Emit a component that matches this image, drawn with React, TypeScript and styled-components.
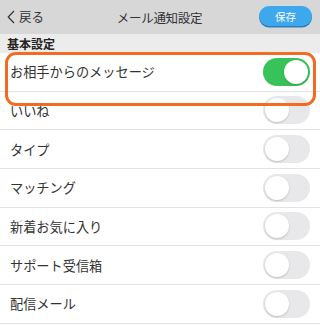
import React, { useState } from 'react';
import styled, { createGlobalStyle } from 'styled-components';

const GlobalStyle = createGlobalStyle`
  html, body {
    margin: 0;
    padding: 0;
    background: #ffffff;
  }
  body {
    font-family: "Noto Sans CJK JP", "Noto Sans", sans-serif;
    color: #333333;
  }
`;

type SettingItem = {
  label: string;
  on: boolean;
};

const initialItems: SettingItem[] = [
  { label: 'お相手からのメッセージ', on: true },
  { label: 'いいね', on: false },
  { label: 'タイプ', on: false },
  { label: 'マッチング', on: false },
  { label: '新着お気に入り', on: false },
  { label: 'サポート受信箱', on: false },
  { label: '配信メール', on: false },
];

export default function App() {
  const [items, setItems] = useState(initialItems);

  const toggle = (index: number) => {
    setItems(items.map((item, i) => (i === index ? { ...item, on: !item.on } : item)));
  };

  return (
    <>
      <GlobalStyle />
      <Page>
        <Header>
          <BackButton>
            <svg width="8" height="14" viewBox="0 0 8 14">
              <path d="M7 1 L1.2 7 L7 13" fill="none" stroke="#333" strokeWidth="1.2" />
            </svg>
            <span>戻る</span>
          </BackButton>
          <Title>メール通知設定</Title>
          <SaveButton>保存</SaveButton>
        </Header>
        <SectionTitle>基本設定</SectionTitle>
        <List>
          <Highlight />
          {items.map((item, i) => (
            <Row key={item.label}>
              <Label>{item.label}</Label>
              <Switch $on={item.on} onClick={() => toggle(i)}>
                <Knob $on={item.on} />
              </Switch>
            </Row>
          ))}
        </List>
      </Page>
    </>
  );
}

const Page = styled.div`
  width: 320px;
  height: 326px;
  overflow: hidden;
  background: #ffffff;
`;

const Header = styled.div`
  height: 34px;
  display: grid;
  grid-template-columns: 1fr auto 1fr;
  align-items: center;
  padding: 0 8px 0 7px;
  background: #d7d7d7;
  box-sizing: border-box;
`;

const BackButton = styled.div`
  display: flex;
  align-items: center;
  gap: 4px;
  font-size: 12.5px;
  color: #333;
  justify-self: start;

  span {
    line-height: 1;
  }
`;

const Title = styled.div`
  font-size: 12.5px;
  color: #333;
  letter-spacing: -0.3px;
`;

const SaveButton = styled.button`
  justify-self: end;
  width: 53px;
  height: 20px;
  border: none;
  border-radius: 10px;
  background: #3ea8ec;
  box-shadow: 0 1.5px 0 #2a7fbf;
  color: #ffffff;
  font-family: inherit;
  font-size: 10.5px;
  padding: 0;
  margin-top: -2px;
  cursor: pointer;
`;

const SectionTitle = styled.div`
  height: 19px;
  display: flex;
  align-items: center;
  padding-left: 7px;
  background: #ececec;
  font-size: 12px;
  font-weight: bold;
  color: #222;
`;

const List = styled.div`
  position: relative;
`;

const Highlight = styled.div`
  position: absolute;
  top: -1px;
  left: 5px;
  width: 311px;
  height: 54px;
  box-sizing: border-box;
  border: 3px solid #f36b22;
  border-radius: 11px;
  pointer-events: none;
  z-index: 2;
`;

const Row = styled.div`
  height: 38.67px;
  box-sizing: border-box;
  display: flex;
  align-items: center;
  justify-content: space-between;
  padding: 0 10px 0 10px;
  border-bottom: 1px solid #e3e3e3;
  background: #ffffff;
`;

const Label = styled.div`
  font-size: 13.2px;
  color: #333;
`;

const Switch = styled.div<{ $on: boolean }>`
  position: relative;
  width: 47px;
  height: 28px;
  border-radius: 14px;
  background: ${(p) => (p.$on ? '#38c25a' : '#e8e8ea')};
  cursor: pointer;
  flex-shrink: 0;
`;

const Knob = styled.div<{ $on: boolean }>`
  position: absolute;
  top: 2px;
  left: ${(p) => (p.$on ? '21px' : '2px')};
  width: 24px;
  height: 24px;
  border-radius: 50%;
  background: #ffffff;
  box-shadow: 0 1px 2px rgba(0, 0, 0, 0.18);
`;
